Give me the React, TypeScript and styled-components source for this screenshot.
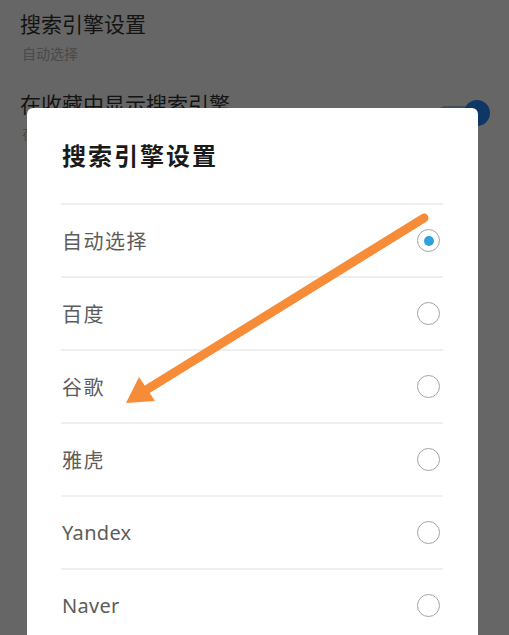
import React from "react";
import styled, { createGlobalStyle } from "styled-components";

const GlobalStyle = createGlobalStyle`
  html, body {
    margin: 0;
    padding: 0;
    background: #ffffff;
  }
  body {
    font-family: "Noto Sans", "Noto Sans CJK SC", sans-serif;
  }
`;

const Page = styled.div`
  position: relative;
  width: 509px;
  height: 635px;
  overflow: hidden;
  background: #ffffff;
`;

const SettingsList = styled.div`
  display: flex;
  flex-direction: column;
`;

const SettingItem = styled.div`
  display: flex;
  align-items: flex-start;
  justify-content: space-between;
  padding: 8px 19px 17px 20px;
`;

const SettingText = styled.div`
  display: flex;
  flex-direction: column;
  gap: 5px;
`;

const SettingTitle = styled.span`
  font-family: "Noto Sans CJK SC", sans-serif;
  font-size: 21px;
  line-height: 30px;
  color: #333333;
`;

const SettingSubtitle = styled.span`
  font-family: "Noto Sans CJK SC", sans-serif;
  font-size: 14px;
  line-height: 20px;
  padding-left: 2px;
  color: #b8b8b8;
`;

const Toggle = styled.div`
  display: flex;
  align-items: center;
  margin-top: 12px;
`;

const ToggleTrack = styled.div`
  width: 34px;
  height: 14px;
  border-radius: 7px;
  background: #a9c3e6;
  margin-right: -8px;
`;

const ToggleKnob = styled.div`
  width: 26px;
  height: 26px;
  border-radius: 50%;
  background: #2389ff;
`;

const Overlay = styled.div`
  position: absolute;
  inset: 0;
  background: rgba(0, 0, 0, 0.6);
  display: flex;
  align-items: flex-start;
  padding: 108px 0 0 27px;
`;

const Dialog = styled.div`
  width: 451px;
  background: #ffffff;
  border-radius: 6px;
  padding: 0 35px 0 34px;
  box-sizing: border-box;
`;

const DialogTitle = styled.h2`
  margin: 0;
  padding: 31px 0 0 1px;
  height: 95px;
  box-sizing: border-box;
  font-family: "Noto Sans CJK SC", sans-serif;
  font-weight: 700;
  font-size: 24px;
  line-height: 32px;
  letter-spacing: 2px;
  color: #1a1a1a;
`;

const OptionRow = styled.div`
  display: flex;
  align-items: center;
  justify-content: space-between;
  height: 73px;
  border-top: 2px solid #efefef;
  box-sizing: border-box;
  padding: 0 3px 0 1px;
`;

const OptionLabel = styled.span<{ $latin?: boolean }>`
  font-family: ${(p) =>
    p.$latin ? `"Noto Sans", sans-serif` : `"Noto Sans CJK SC", sans-serif`};
  font-size: 20px;
  letter-spacing: ${(p) => (p.$latin ? "0.3px" : "1.5px")};
  color: #5c5c5c;
`;

const Radio = styled.span<{ $checked?: boolean }>`
  display: flex;
  align-items: center;
  justify-content: center;
  width: 23px;
  height: 23px;
  border-radius: 50%;
  border: 1.5px solid #a3a3a3;
  box-sizing: border-box;

  &::after {
    content: "";
    display: ${(p) => (p.$checked ? "block" : "none")};
    width: 10px;
    height: 10px;
    border-radius: 50%;
    background: #2ea2dd;
  }
`;

const Annotation = styled.svg`
  position: absolute;
  left: 0;
  top: 0;
  pointer-events: none;
`;

const options = [
  { label: "自动选择", checked: true },
  { label: "百度" },
  { label: "谷歌" },
  { label: "雅虎" },
  { label: "Yandex", latin: true },
  { label: "Naver", latin: true },
];

const App: React.FC = () => {
  return (
    <Page>
      <GlobalStyle />
      <SettingsList>
        <SettingItem>
          <SettingText>
            <SettingTitle>搜索引擎设置</SettingTitle>
            <SettingSubtitle>自动选择</SettingSubtitle>
          </SettingText>
        </SettingItem>
        <SettingItem>
          <SettingText>
            <SettingTitle>在收藏中显示搜索引擎</SettingTitle>
            <SettingSubtitle>在首</SettingSubtitle>
          </SettingText>
          <Toggle>
            <ToggleTrack />
            <ToggleKnob />
          </Toggle>
        </SettingItem>
      </SettingsList>

      <Overlay>
        <Dialog>
          <DialogTitle>搜索引擎设置</DialogTitle>
          {options.map((o) => (
            <OptionRow key={o.label}>
              <OptionLabel $latin={o.latin}>{o.label}</OptionLabel>
              <Radio $checked={o.checked} />
            </OptionRow>
          ))}
        </Dialog>
      </Overlay>

      <Annotation width="509" height="635" viewBox="0 0 509 635">
        <line
          x1="424"
          y1="218"
          x2="146"
          y2="390"
          stroke="#f68c38"
          strokeWidth="9"
          strokeLinecap="round"
        />
        <polygon points="126,403 139,377 155,401" fill="#f68c38" />
      </Annotation>
    </Page>
  );
};

export default App;
